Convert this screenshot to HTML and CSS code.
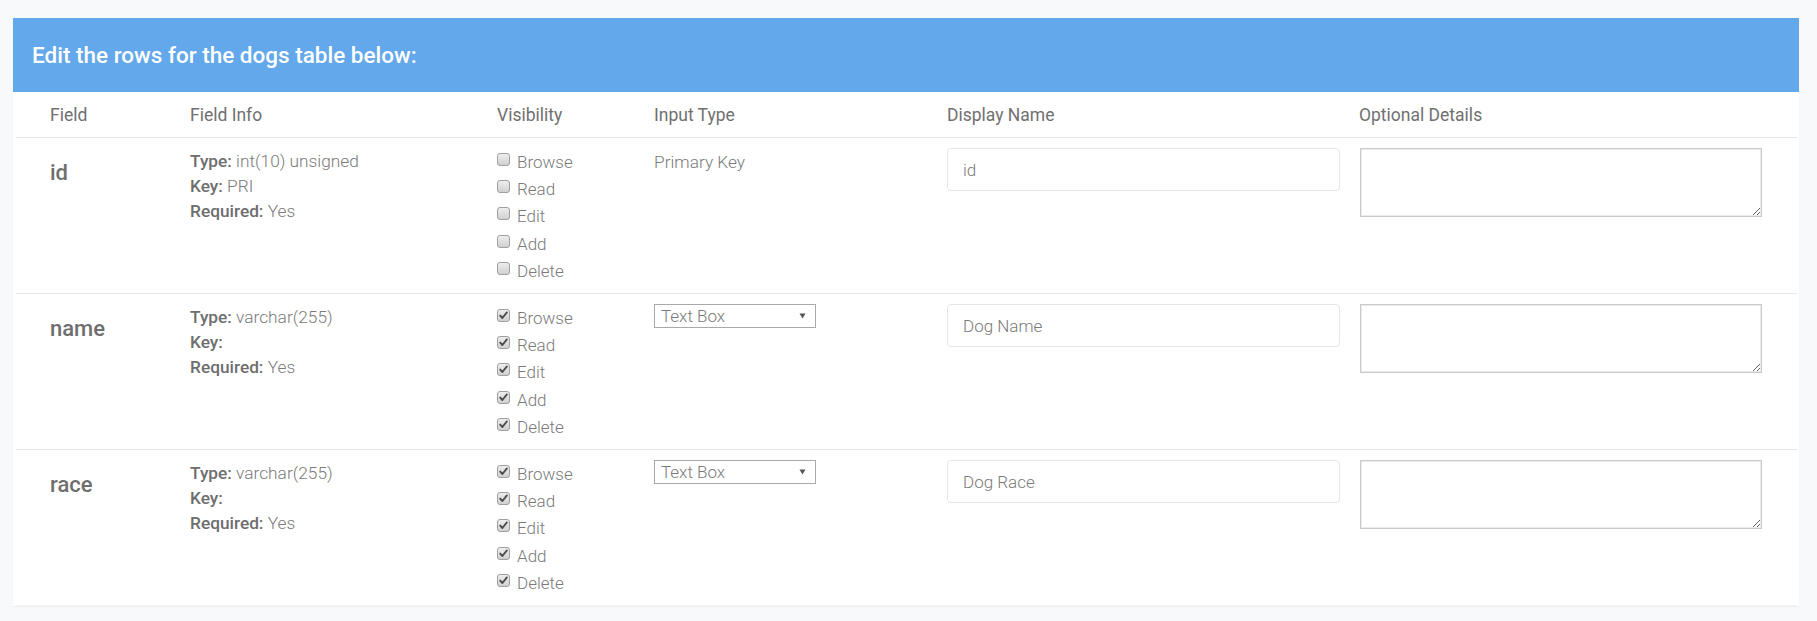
FILE: index.html
```html
<!DOCTYPE html>
<html>
<head>
<meta charset="utf-8">
<link rel="stylesheet" href="styles.css">
</head>
<body>
<svg class="defs" width="0" height="0">
  <defs>
    <linearGradient id="cbg" x1="0" y1="0" x2="0" y2="1">
      <stop offset="0" stop-color="#efefef"/>
      <stop offset="1" stop-color="#cfcfcf"/>
    </linearGradient>
    <symbol id="cb-off" viewBox="0 0 13 13">
      <rect x="0.5" y="0.5" width="12" height="12" rx="2.5" fill="url(#cbg)" stroke="#a0a0a0"/>
    </symbol>
    <symbol id="cb-on" viewBox="0 0 13 13">
      <rect x="0.5" y="0.5" width="12" height="12" rx="2.5" fill="url(#cbg)" stroke="#a0a0a0"/>
      <path d="M3.2 6.6 L5.4 9 L9.9 3.4" fill="none" stroke="#4d4d4d" stroke-width="1.9" stroke-linecap="round" stroke-linejoin="round"/>
    </symbol>
  </defs>
</svg>
<div class="page">
  <div class="panel">
    <div class="panel-head">
      <h3 class="panel-title">Edit the rows for the dogs table below:</h3>
    </div>
    <div class="panel-body">
      <div class="grid head-row">
        <div>Field</div>
        <div>Field Info</div>
        <div>Visibility</div>
        <div>Input Type</div>
        <div>Display Name</div>
        <div>Optional Details</div>
      </div>

      <div class="grid row">
        <div class="field-name">id</div>
        <div class="info">
          <div><b>Type:</b> int(10) unsigned</div>
          <div><b>Key:</b> PRI</div>
          <div><b>Required:</b> Yes</div>
        </div>
        <div class="vis">
          <label class="opt"><svg class="cb"><use href="#cb-off"/></svg>Browse</label>
          <label class="opt"><svg class="cb"><use href="#cb-off"/></svg>Read</label>
          <label class="opt"><svg class="cb"><use href="#cb-off"/></svg>Edit</label>
          <label class="opt"><svg class="cb"><use href="#cb-off"/></svg>Add</label>
          <label class="opt"><svg class="cb"><use href="#cb-off"/></svg>Delete</label>
        </div>
        <div class="itype"><div class="pk">Primary Key</div></div>
        <div><input class="txt" type="text" value="id"></div>
        <div><textarea class="area"></textarea></div>
      </div>

      <div class="grid row">
        <div class="field-name">name</div>
        <div class="info">
          <div><b>Type:</b> varchar(255)</div>
          <div><b>Key:</b></div>
          <div><b>Required:</b> Yes</div>
        </div>
        <div class="vis">
          <label class="opt"><svg class="cb"><use href="#cb-on"/></svg>Browse</label>
          <label class="opt"><svg class="cb"><use href="#cb-on"/></svg>Read</label>
          <label class="opt"><svg class="cb"><use href="#cb-on"/></svg>Edit</label>
          <label class="opt"><svg class="cb"><use href="#cb-on"/></svg>Add</label>
          <label class="opt"><svg class="cb"><use href="#cb-on"/></svg>Delete</label>
        </div>
        <div class="itype">
          <span class="sel-wrap">
            <select class="sel"><option>Text Box</option></select>
            <svg class="sel-arrow" width="7" height="6" viewBox="0 0 7 6"><path d="M0.5 0.5 H6.5 L3.5 5.5 Z" fill="#555"/></svg>
          </span>
        </div>
        <div><input class="txt" type="text" value="Dog Name"></div>
        <div><textarea class="area"></textarea></div>
      </div>

      <div class="grid row">
        <div class="field-name">race</div>
        <div class="info">
          <div><b>Type:</b> varchar(255)</div>
          <div><b>Key:</b></div>
          <div><b>Required:</b> Yes</div>
        </div>
        <div class="vis">
          <label class="opt"><svg class="cb"><use href="#cb-on"/></svg>Browse</label>
          <label class="opt"><svg class="cb"><use href="#cb-on"/></svg>Read</label>
          <label class="opt"><svg class="cb"><use href="#cb-on"/></svg>Edit</label>
          <label class="opt"><svg class="cb"><use href="#cb-on"/></svg>Add</label>
          <label class="opt"><svg class="cb"><use href="#cb-on"/></svg>Delete</label>
        </div>
        <div class="itype">
          <span class="sel-wrap">
            <select class="sel"><option>Text Box</option></select>
            <svg class="sel-arrow" width="7" height="6" viewBox="0 0 7 6"><path d="M0.5 0.5 H6.5 L3.5 5.5 Z" fill="#555"/></svg>
          </span>
        </div>
        <div><input class="txt" type="text" value="Dog Race"></div>
        <div><textarea class="area"></textarea></div>
      </div>
    </div>
  </div>
</div>
</body>
</html>
```

FILE: styles.css
```css
* { box-sizing: border-box; }

html, body {
  margin: 0;
  padding: 0;
  background: #f8f9fa;
  font-family: Roboto, "Liberation Sans", sans-serif;
  color: #747474;
}

.defs { position: absolute; width: 0; height: 0; overflow: hidden; }

.page {
  padding: 18px 18px 15px 13px;
}

.panel {
  width: 1786px;
  background: #fff;
  box-shadow: 0 1px 1px rgba(0, 0, 0, 0.04);
}

.panel-head {
  height: 74px;
  background: #62a8ea;
  display: flex;
  align-items: center;
  padding-left: 19px;
}

.panel-title {
  margin: 0;
  font-size: 22.5px;
  font-weight: 500;
  color: #fff;
  line-height: 1;
  padding-top: 1px;
}

.panel-body {
  padding: 0 2px 0 3px;
}

.grid {
  display: grid;
  grid-template-columns: 140px 307px 157px 293px 412px 438px;
  padding-left: 34px;
  border-bottom: 1px solid #e6e9eb;
}

.head-row {
  height: 46px;
  align-items: center;
  font-size: 17.5px;
  font-weight: 400;
  color: #707070;
}

.row {
  height: 156px;
  padding-top: 10px;
  align-items: start;
}

.row:last-child {
  border-bottom-color: #f1f3f4;
}

.field-name {
  font-size: 22px;
  font-weight: 500;
  line-height: 27px;
  padding-top: 11px;
  color: #6e6e6e;
}

.info {
  padding-top: 1px;
  font-size: 17.3px;
  font-weight: 300;
  line-height: 25px;
  color: #7a7a7a;
}

.info b {
  font-weight: 500;
  color: #6e6e6e;
}

.vis {
  padding-top: 1px;
}

.opt {
  display: flex;
  align-items: flex-start;
  height: 27.2px;
  line-height: 27.2px;
  font-size: 17px;
  font-weight: 300;
  color: #7a7a7a;
}

.cb {
  width: 13px;
  height: 13px;
  margin-top: 4px;
  margin-right: 7px;
  flex: none;
}

.pk {
  padding-top: 1px;
  font-size: 17.3px;
  font-weight: 300;
  line-height: 27px;
  color: #7a7a7a;
}

.sel-wrap {
  position: relative;
  display: inline-block;
}

.sel {
  appearance: none;
  -webkit-appearance: none;
  display: block;
  width: 162px;
  height: 24px;
  border: 1px solid #a9a9a9;
  border-radius: 0;
  background: #fff;
  padding: 0 0 0 6px;
  font-family: Roboto, "Liberation Sans", sans-serif;
  font-size: 17px;
  font-weight: 300;
  color: #7a7a7a;
}

.sel-arrow {
  position: absolute;
  right: 10px;
  top: 9px;
}

.txt {
  display: block;
  width: 393px;
  height: 43px;
  border: 1px solid #e4e7ea;
  border-radius: 4px;
  padding: 0 15px;
  font-family: Roboto, "Liberation Sans", sans-serif;
  font-size: 17px;
  font-weight: 300;
  color: #7a7a7a;
  background: #fff;
}

.area {
  display: block;
  width: 402px;
  height: 69px;
  margin-left: 1px;
  border: 1px solid #c9c9c9;
  box-shadow: inset 0 0 0 1px #ebebeb;
  border-radius: 0;
  background: #fff;
  resize: both;
  font-family: Roboto, "Liberation Sans", sans-serif;
}
```
